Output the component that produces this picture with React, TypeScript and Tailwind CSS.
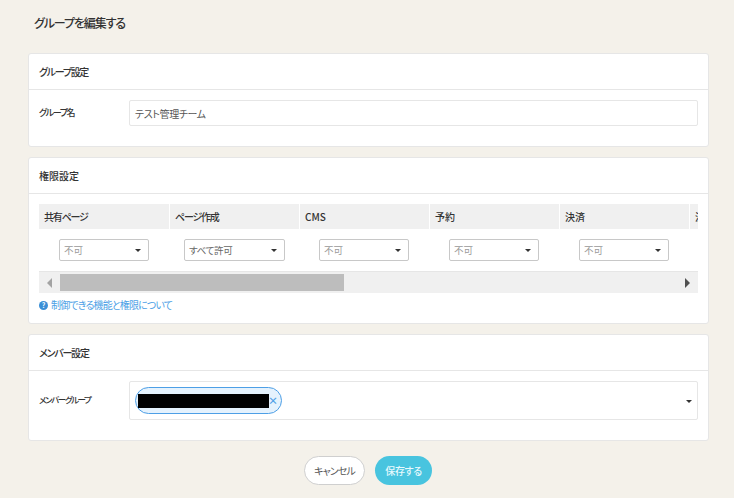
const font = "font-['Noto_Sans_CJK_JP','Noto_Sans',sans-serif] [font-feature-settings:'palt']";

const columns = [
  { name: "共有ページ", value: "不可", wide: false, col: "w-[131px]", cell: "pr-[1px]" },
  { name: "ページ作成", value: "すべて許可", wide: true, col: "w-[130px]", cell: "pr-[1px]" },
  { name: "CMS", value: "不可", wide: false, col: "w-[130px]", cell: "pr-[2px]" },
  { name: "予約", value: "不可", wide: false, col: "w-[130px]", cell: "pr-[2px]" },
  { name: "決済", value: "不可", wide: false, col: "w-[130px]", cell: "pr-[2px]" },
];

function Caret() {
  return <span className="w-0 h-0 border-x-[3.5px] border-x-transparent border-t-[3.5px] border-t-[#333]"></span>;
}

function Card({ title, titleClass, children }: { title: string; titleClass: string; children: React.ReactNode }) {
  return (
    <section className="bg-white border border-[#e6e6e6] rounded-[3px]">
      <h2 className={`h-[36px] border-b border-[#e6e6e6] pl-[10px] flex items-center text-[10px] font-medium text-[#333] ${titleClass}`}>
        {title}
      </h2>
      {children}
    </section>
  );
}

export default function App() {
  return (
    <div className={`${font} w-[734px] h-[498px] overflow-hidden bg-[#f4f1ea] pl-[28px] pr-[25px]`}>
      <h1 className="h-[53px] pt-[14px] pl-[6px] text-[12px] leading-[18px] tracking-[-1.1px] font-medium text-[#333]">グループを編集する</h1>

      <div className="flex flex-col gap-[10px]">
        <Card title="グループ設定" titleClass="tracking-[-1.3px]">
          <div className="h-[56px] flex pl-[10px] pr-[10px] pt-[10px]">
            <label className="w-[90px] h-[26px] flex items-center text-[9px] tracking-[-1.4px] font-medium text-[#333]">グループ名</label>
            <div className="flex-1 h-[26px] border border-[#e6e6e6] rounded-[2px] flex items-center pl-[5px] text-[10px] tracking-[-0.4px] text-[#555]">
              テスト管理チーム
            </div>
          </div>
        </Card>

        <Card title="権限設定" titleClass="">
          <div className="h-[129px] px-[10px] pt-[10px]">
            <div className="w-[659px] overflow-hidden">
              <div className="flex w-[800px]">
                {columns.map((c) => (
                  <div key={c.name} className={`${c.col} shrink-0`}>
                    <div className={`h-[25px] bg-[#f0f0f0] border-r border-white flex items-center pl-[5px] text-[10px] font-medium text-[#333] ${c.name.includes("ページ") ? "tracking-[-1.2px]" : ""}`}>
                      {c.name}
                    </div>
                    <div className={`h-[42px] flex items-center justify-center ${c.cell}`}>
                      <div
                        className={`${c.wide ? "w-[101px] text-[#666] tracking-[-0.3px]" : "w-[90px] text-[#999]"} h-[22px] border border-[#c8c8c8] rounded-[2px] flex items-center justify-between pl-[4px] pr-[7px] text-[9.5px]`}
                      >
                        <span>{c.value}</span>
                        <Caret />
                      </div>
                    </div>
                  </div>
                ))}
                <div className="w-[130px] shrink-0 h-[25px] bg-[#f0f0f0] pl-[5px] text-[10px] leading-[25px] font-medium text-[#333]">
                  決
                </div>
              </div>
            </div>
            <div className="w-[659px] h-[22px] bg-[#f0f0f0] border-t border-[#e6e6e6] flex items-center">
              <span className="ml-[8px] w-0 h-0 border-y-[5px] border-y-transparent border-r-[5px] border-r-[#a3a3a3]"></span>
              <div className="ml-[8px] w-[284px] h-[17px] bg-[#bdbdbd]"></div>
              <span className="ml-auto mr-[8px] w-0 h-0 border-y-[5px] border-y-transparent border-l-[5px] border-l-[#505050]"></span>
            </div>
            <a className="mt-[5px] flex items-center gap-[3px] text-[10px] leading-[14px] tracking-[-0.85px] text-[#4d9fe6]">
              <span className="w-[9px] h-[9px] rounded-full bg-[#3b8fd6] text-white text-[7px] leading-[9px] tracking-normal font-bold text-center">?</span>
              制御できる機能と権限について
            </a>
          </div>
        </Card>

        <Card title="メンバー設定" titleClass="tracking-[-1.2px]">
          <div className="h-[69px] flex pl-[10px] pr-[10px] pt-[10px]">
            <label className="w-[90px] h-[36px] flex items-center text-[8.5px] tracking-[-1.4px] font-medium text-[#333]">メンバーグループ</label>
            <div className="flex-1 h-[39px] border border-[#e6e6e6] rounded-[2px] flex items-center pl-[5px] pr-[5px]">
              <div className="w-[147px] h-[27px] border border-[#4d9fe6] bg-[#e5f2fd] rounded-full flex items-center pl-[2px]">
                <div className="w-[131px] h-[14px] bg-black"></div>
                <span className="-ml-[1px] text-[10px] leading-none font-bold text-[#4d9fe6]">×</span>
              </div>
              <span className="ml-auto mt-[2px] inline-flex"><Caret /></span>
            </div>
          </div>
        </Card>
      </div>

      <div className="mt-[15px] pr-[1px] flex justify-center gap-[10px]">
        <button className="w-[61px] h-[29px] bg-white border border-[#cfcfcf] rounded-full text-[10px] tracking-[-0.9px] text-[#555]">
          キャンセル
        </button>
        <button className="w-[57px] h-[29px] bg-[#48c4df] rounded-full text-[10px] tracking-[-0.4px] font-medium text-[#e6f9fd]">
          保存する
        </button>
      </div>
    </div>
  );
}
